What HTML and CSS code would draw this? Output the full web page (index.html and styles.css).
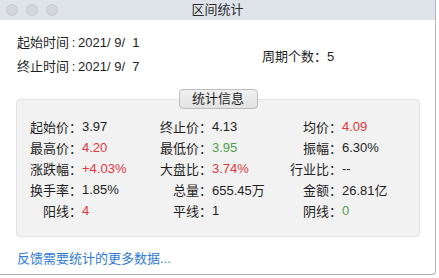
FILE: index.html
```html
<!DOCTYPE html>
<html lang="zh">
<head>
<meta charset="utf-8">
<title>区间统计</title>
<link rel="stylesheet" href="styles.css">
</head>
<body>
<div class="window">
  <div class="titlebar">
    <div class="lights">
      <span class="light"></span>
      <span class="light"></span>
      <span class="light"></span>
    </div>
    <div class="title">区间统计</div>
    <div></div>
  </div>
  <div class="top">
    <div class="dates">
      <div class="line">起始时间<span class="colon">:</span>2021/ 9/  1</div>
      <div class="line">终止时间<span class="colon">:</span>2021/ 9/  7</div>
    </div>
    <div class="period">周期个数：5</div>
  </div>
  <div class="group">
    <div class="group-title">统计信息</div>
    <div class="stats">
      <span class="lbl">起始价：</span><span class="val">3.97</span>
      <span class="lbl">终止价：</span><span class="val">4.13</span>
      <span class="lbl">均价：</span><span class="val red">4.09</span>

      <span class="lbl">最高价：</span><span class="val red">4.20</span>
      <span class="lbl">最低价：</span><span class="val green">3.95</span>
      <span class="lbl">振幅：</span><span class="val">6.30%</span>

      <span class="lbl">涨跌幅：</span><span class="val red">+4.03%</span>
      <span class="lbl">大盘比：</span><span class="val red">3.74%</span>
      <span class="lbl">行业比：</span><span class="val">--</span>

      <span class="lbl">换手率：</span><span class="val">1.85%</span>
      <span class="lbl">总量：</span><span class="val">655.45万</span>
      <span class="lbl">金额：</span><span class="val">26.81亿</span>

      <span class="lbl">阳线：</span><span class="val red">4</span>
      <span class="lbl">平线：</span><span class="val">1</span>
      <span class="lbl">阴线：</span><span class="val green">0</span>
    </div>
  </div>
  <div class="footer">
    <a class="link" href="#">反馈需要统计的更多数据...</a>
  </div>
</div>
</body>
</html>
```
FILE: styles.css
```css
html, body {
  margin: 0;
  padding: 0;
  background: #ffffff;
}
body {
  font-family: "Liberation Sans", "Noto Sans CJK SC", sans-serif;
  font-size: 13px;
  color: #1e1e1e;
}
.window {
  width: 435px;
  height: 274px;
  background: #ffffff;
  border-right: 1px solid #b4b4b4;
  border-bottom: 1px solid #b4b4b4;
  border-bottom-right-radius: 4px;
  overflow: hidden;
}
.titlebar {
  height: 20px;
  background: #dfe4ea;
  display: grid;
  grid-template-columns: 1fr auto 1fr;
  align-items: center;
}
.lights {
  display: flex;
  gap: 8px;
  padding-left: 6px;
}
.light {
  width: 12px;
  height: 12px;
  box-sizing: border-box;
  border-radius: 50%;
  background: #d3d7dc;
  border: 1px solid #c8ccd1;
}
.title {
  font-size: 13px;
  color: #2a2a2a;
  line-height: 20px;
}
.top {
  display: flex;
  align-items: center;
  padding: 11px 0 0 17px;
}
.dates {
  width: 245px;
}
.line {
  line-height: 24px;
  white-space: pre;
}
.colon {
  display: inline-block;
  width: 9px;
  text-align: center;
}
.period {
  white-space: pre;
}
.group {
  margin: 20px 0 0 16px;
  width: 402px;
  height: 136px;
  background: #f2f2f2;
  border: 1px solid #e4e4e4;
  border-radius: 4px;
  display: flex;
  flex-direction: column;
  align-items: flex-start;
}
.group-title {
  align-self: center;
  margin-top: -11px;
  width: 77px;
  height: 18px;
  line-height: 18px;
  text-align: center;
  background: linear-gradient(#f0f0f0, #e2e2e2);
  border: 1px solid #bdbdbd;
  border-radius: 4px;
  color: #1e1e1e;
}
.stats {
  display: grid;
  grid-template-columns: 52px 78px 52px 78px 52px 78px;
  grid-auto-rows: 21px;
  align-items: center;
  padding: 7px 0 0 13px;
}
.lbl {
  text-align: right;
  white-space: nowrap;
}
.val {
  white-space: nowrap;
}
.red {
  color: #e0363d;
}
.green {
  color: #4f9e4f;
}
.footer {
  padding: 13px 0 0 17px;
  line-height: 18px;
}
.link {
  color: #2f7ad6;
  text-decoration: none;
}
```
